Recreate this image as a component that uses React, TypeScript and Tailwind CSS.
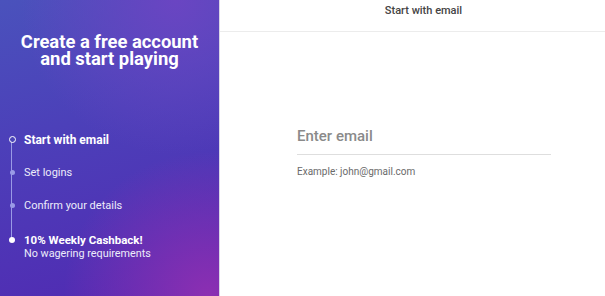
export default function App() {
  const steps = [
    { label: "Start with email", active: true },
    { label: "Set logins" },
    { label: "Confirm your details" },
  ]

  return (
    <div className="flex h-[296px] w-[605px] font-['Roboto',sans-serif]">
      <aside className="relative flex w-[219px] shrink-0 flex-col bg-[radial-gradient(circle_at_95%_100%,#8c2fb2_0%,transparent_40%),radial-gradient(circle_at_80%_0%,#6a45c2_0%,transparent_45%),linear-gradient(165deg,#4a52bc_0%,#4c40b9_40%,#5129b2_100%)] text-white">
        <h1 className="mt-[33px] text-center text-[18.4px] font-bold leading-[17px]">
          Create a free account
          <br />
          and start playing
        </h1>

        <ul className="relative mt-[66px] flex flex-col">
          <span className="absolute left-[11px] top-[5px] h-[101px] w-px bg-[#9a9ae6]" />
          {steps.map((step) => (
            <li key={step.label} className="relative flex h-[33px] items-start">
              <span className="flex w-6 justify-center pt-[3px]">
                {step.active ? (
                  <span className="relative z-10 h-[7px] w-[7px] rounded-full border-[1.5px] border-white bg-[#4b45b8]" />
                ) : (
                  <span className="relative z-10 mt-px h-[5px] w-[5px] rounded-full bg-[#9a9ae6]" />
                )}
              </span>
              <span className={step.active ? "text-[12px] font-bold leading-[14px]" : "text-[11px] leading-[14px] text-[#ececfa]"}>
                {step.label}
              </span>
            </li>
          ))}
          <li className="relative mt-[1px] flex items-start">
            <span className="flex w-6 justify-center pt-[4px]">
              <span className="relative z-10 h-[6px] w-[6px] rounded-full bg-white" />
            </span>
            <div className="leading-[14px]">
              <p className="text-[11.5px] font-bold">10% Weekly Cashback!</p>
              <p className="text-[10.8px] text-[#ececfa]">No wagering requirements</p>
            </div>
          </li>
        </ul>
      </aside>

      <main className="flex flex-1 flex-col border-l border-[#d9d6e6] bg-white">
        <header className="h-[32px] border-b border-[#ececec] pl-[22px] pt-[4px] text-center text-[11px] font-medium leading-[14px] text-[#444]">
          Start with email
        </header>
        <div className="ml-[77px] mt-[92px] w-[254px]">
          <input
            placeholder="Enter email"
            className="w-full border-b border-[#dedede] pb-[6px] text-[15px] font-medium text-[#333] outline-none placeholder:text-[#8a8a8a]"
          />
          <p className="mt-[9px] text-[10px] text-[#6a6a6a]">Example: john@gmail.com</p>
        </div>
      </main>
    </div>
  )
}
